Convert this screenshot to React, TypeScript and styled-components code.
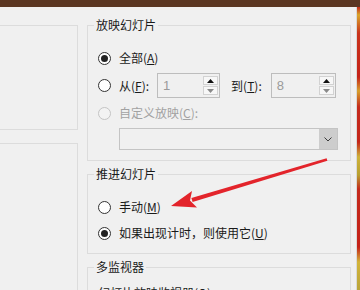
import React from "react";
import styled, { createGlobalStyle } from "styled-components";

const Global = createGlobalStyle`
  html, body { margin: 0; padding: 0; width: 360px; height: 290px; overflow: hidden; background: #f0f0f0; }
  #root { width: 360px; height: 290px; }
  * { box-sizing: border-box; }
`;

const FONT = `"Noto Sans CJK SC", "Microsoft YaHei", sans-serif`;

const Screen = styled.div`
  position: relative;
  width: 360px;
  height: 290px;
  overflow: hidden;
  display: flex;
  flex-direction: column;
  font-family: ${FONT};
  font-size: 12px;
  color: #1a1a1a;
  background: #f0f0f0;
`;

const TopBar = styled.div`
  height: 7px;
  flex: none;
  background: #5b3622;
`;

const Body = styled.div`
  flex: 1;
  display: flex;
  min-height: 0;
`;

const Dialog = styled.div`
  width: 357px;
  flex: none;
  display: flex;
  background: #f0f0f0;
  border-right: 1px solid #d8d8d8;
`;

const EdgeStrip = styled.div`
  flex: 1;
  background: linear-gradient(
    180deg,
    #c42a1c 0px,
    #d9a62a 8px,
    #c9341c 26px,
    #c42218 70px,
    #d6a02c 84px,
    #c42a1c 100px,
    #c4261a 135px,
    #cdb23a 150px,
    #b8a030 168px,
    #c42a1c 182px,
    #c42218 240px,
    #d2b43a 255px,
    #b9a43a 283px
  );
`;

const LeftCol = styled.div`
  width: 78px;
  flex: none;
  display: flex;
  flex-direction: column;
  padding-top: 18px;
  gap: 13px;
`;

const SideBox = styled.div<{ $h?: number }>`
  border: 1px solid #dcdcdc;
  border-left: none;
  ${(p) => (p.$h ? `height: ${p.$h}px; flex: none;` : `flex: 1; border-bottom: none;`)}
`;

const RightCol = styled.div`
  width: 264px;
  flex: none;
  margin-left: 9px;
  padding-top: 10px;
  display: flex;
  flex-direction: column;
  gap: 5px;
`;

const Group = styled.fieldset`
  margin: 0;
  padding: 0;
  min-width: 0;
  border: 1px solid #dcdcdc;
  flex: none;
`;

const Legend = styled.legend`
  margin-left: 6px;
  padding: 0 2px;
  line-height: 16px;
  font-size: 12px;
  color: #1a1a1a;
`;

const GroupBody = styled.div<{ $pt: number; $pb: number; $gap: number }>`
  display: flex;
  flex-direction: column;
  padding: ${(p) => p.$pt}px 0 ${(p) => p.$pb}px 10px;
  gap: ${(p) => p.$gap}px;
`;

const Row = styled.div<{ $h: number }>`
  display: flex;
  align-items: center;
  height: ${(p) => p.$h}px;
`;

const Radio = styled.span<{ $checked?: boolean; $disabled?: boolean }>`
  width: 13px;
  height: 13px;
  flex: none;
  border-radius: 50%;
  border: 1px solid ${(p) => (p.$disabled ? "#c4c4c4" : "#333333")};
  background: ${(p) => (p.$disabled ? "#f3f3f3" : "#ffffff")};
  display: flex;
  align-items: center;
  justify-content: center;
  margin-right: 8px;
  &::after {
    content: "";
    width: 7px;
    height: 7px;
    border-radius: 50%;
    background: #222222;
    display: ${(p) => (p.$checked ? "block" : "none")};
  }
`;

const Label = styled.span<{ $disabled?: boolean; $ml?: number }>`
  color: ${(p) => (p.$disabled ? "#a2a2a2" : "#1a1a1a")};
  white-space: nowrap;
  line-height: 16px;
  margin-left: ${(p) => p.$ml ?? 0}px;
`;

const Key = styled.span`
  text-decoration: underline;
  text-underline-offset: 1px;
`;

const Spin = styled.div<{ $w: number; $ml: number }>`
  width: ${(p) => p.$w}px;
  height: 25px;
  margin-left: ${(p) => p.$ml}px;
  border: 1px solid #bdbdbd;
  display: flex;
  align-items: center;
  padding: 1px;
`;

const SpinValue = styled.span`
  flex: 1;
  padding-left: 4px;
  color: #9a9a9a;
  font-family: "Liberation Sans", ${FONT};
  font-size: 13px;
`;

const SpinBtns = styled.div`
  width: 15px;
  align-self: stretch;
  display: flex;
  flex-direction: column;
  gap: 1px;
  padding: 1px 0;
`;

const SpinBtn = styled.div`
  flex: 1;
  border: 1px solid #d2d2d2;
  background: #f7f7f7;
  display: flex;
  align-items: center;
  justify-content: center;
`;

const Combo = styled.div`
  margin-left: 21px;
  width: 219px;
  height: 22px;
  border: 1px solid #c4c4c4;
  display: flex;
  justify-content: flex-end;
`;

const ComboBtn = styled.div`
  width: 18px;
  background: #cdcdcd;
  display: flex;
  align-items: center;
  justify-content: center;
`;

const Overlay = styled.svg`
  position: absolute;
  left: 0;
  top: 0;
  pointer-events: none;
`;

const Up = ({ c }: { c: string }) => (
  <svg width="7" height="4" viewBox="0 0 7 4">
    <polygon points="0,4 7,4 3.5,0" fill={c} />
  </svg>
);
const Down = ({ c }: { c: string }) => (
  <svg width="7" height="4" viewBox="0 0 7 4">
    <polygon points="0,0 7,0 3.5,4" fill={c} />
  </svg>
);

const SpinBox = ({ w, ml, value }: { w: number; ml: number; value: string }) => (
  <Spin $w={w} $ml={ml}>
    <SpinValue>{value}</SpinValue>
    <SpinBtns>
      <SpinBtn>
        <Up c="#111" />
      </SpinBtn>
      <SpinBtn>
        <Down c="#8a8a8a" />
      </SpinBtn>
    </SpinBtns>
  </Spin>
);

export default function App() {
  return (
    <Screen>
      <Global />
      <TopBar />
      <Body>
        <Dialog>
          <LeftCol>
            <SideBox $h={105} />
            <SideBox />
          </LeftCol>
          <RightCol>
            <Group>
              <Legend>放映幻灯片</Legend>
              <GroupBody $pt={15} $pb={10} $gap={5}>
                <Row $h={20}>
                  <Radio $checked />
                  <Label>
                    全部(<Key>A</Key>)
                  </Label>
                </Row>
                <Row $h={25}>
                  <Radio />
                  <Label>
                    从(<Key>F</Key>):
                  </Label>
                  <SpinBox w={63} ml={8} value="1" />
                  <Label $ml={11}>
                    到(<Key>T</Key>):
                  </Label>
                  <SpinBox w={65} ml={9} value="8" />
                </Row>
                <Row $h={20}>
                  <Radio $disabled />
                  <Label $disabled>
                    自定义放映(<Key>C</Key>):
                  </Label>
                </Row>
                <Combo>
                  <ComboBtn>
                    <svg width="8" height="5" viewBox="0 0 8 5">
                      <polyline points="0.5,0.5 4,4 7.5,0.5" fill="none" stroke="#3a3a3a" strokeWidth="1" />
                    </svg>
                  </ComboBtn>
                </Combo>
              </GroupBody>
            </Group>
            <Group>
              <Legend>推进幻灯片</Legend>
              <GroupBody $pt={15} $pb={10} $gap={6}>
                <Row $h={20}>
                  <Radio />
                  <Label>
                    手动(<Key>M</Key>)
                  </Label>
                </Row>
                <Row $h={20}>
                  <Radio $checked />
                  <Label>
                    如果出现计时，则使用它(<Key>U</Key>)
                  </Label>
                </Row>
              </GroupBody>
            </Group>
            <Group>
              <Legend>多监视器</Legend>
              <GroupBody $pt={10} $pb={10} $gap={5}>
                <Row $h={16}>
                  <Label>
                    幻灯片放映监视器(<Key>O</Key>):
                  </Label>
                </Row>
              </GroupBody>
            </Group>
          </RightCol>
        </Dialog>
        <EdgeStrip />
      </Body>
      <Overlay width="360" height="290" viewBox="0 0 360 290">
        <polygon points="327.4,160.7 326.6,158.3 191.4,197.9 192.6,202.1" fill="#e3242b" />
        <polygon points="171,206 197,207.5 190,200.5 192,191" fill="#e3242b" />
      </Overlay>
    </Screen>
  );
}
